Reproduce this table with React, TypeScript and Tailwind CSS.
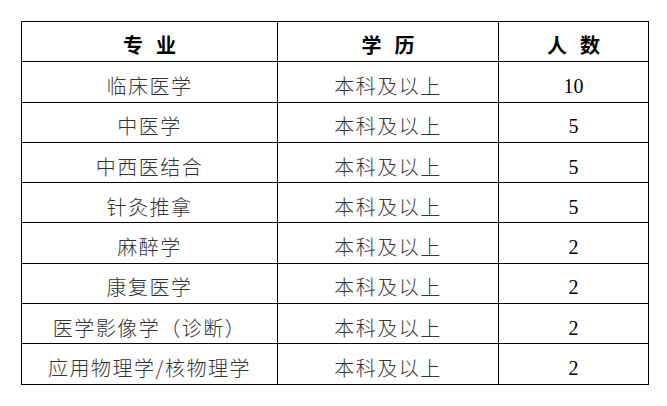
const rows = [
  { major: '临床医学', edu: '本科及以上', count: '10' },
  { major: '中医学', edu: '本科及以上', count: '5' },
  { major: '中西医结合', edu: '本科及以上', count: '5' },
  { major: '针灸推拿', edu: '本科及以上', count: '5' },
  { major: '麻醉学', edu: '本科及以上', count: '2' },
  { major: '康复医学', edu: '本科及以上', count: '2' },
  { major: '医学影像学（诊断）', edu: '本科及以上', count: '2' },
  { major: '应用物理学/核物理学', edu: '本科及以上', count: '2' },
];

const cjk = "font-['Noto_Sans_CJK_SC',sans-serif]";

export default function App() {
  return (
    <div className="w-[667px] h-[406px] bg-white pt-[21px] pl-[21px]">
      <table className="w-[627px] border-collapse table-fixed">
        <colgroup>
          <col className="w-[256px]" />
          <col className="w-[221px]" />
          <col className="w-[150px]" />
        </colgroup>
        <thead>
          <tr className="h-[40.3px]">
            {['专', '学', '人'].map((c, i) => (
              <th key={c} className={`border border-black p-0 pt-[6px] text-[20px] font-bold text-black leading-none ${cjk}`}>
                <span className="inline-flex gap-[13px]">
                  <span>{c}</span>
                  <span>{['业', '历', '数'][i]}</span>
                </span>
              </th>
            ))}
          </tr>
        </thead>
        <tbody>
          {rows.map((r) => (
            <tr key={r.major} className="h-[40.3px]">
              <td className={`border border-black p-0 pt-[8px] text-center text-[20px] leading-none tracking-[1.5px] font-light text-[#333] ${cjk}`}>
                {r.major}
              </td>
              <td className={`border border-black p-0 pt-[8px] text-center text-[20px] leading-none tracking-[1.5px] font-light text-[#333] ${cjk}`}>
                {r.edu}
              </td>
              <td className="border border-black p-0 pt-[8px] text-center text-[20px] leading-none text-black font-['Liberation_Serif',serif]">
                {r.count}
              </td>
            </tr>
          ))}
        </tbody>
      </table>
    </div>
  );
}
